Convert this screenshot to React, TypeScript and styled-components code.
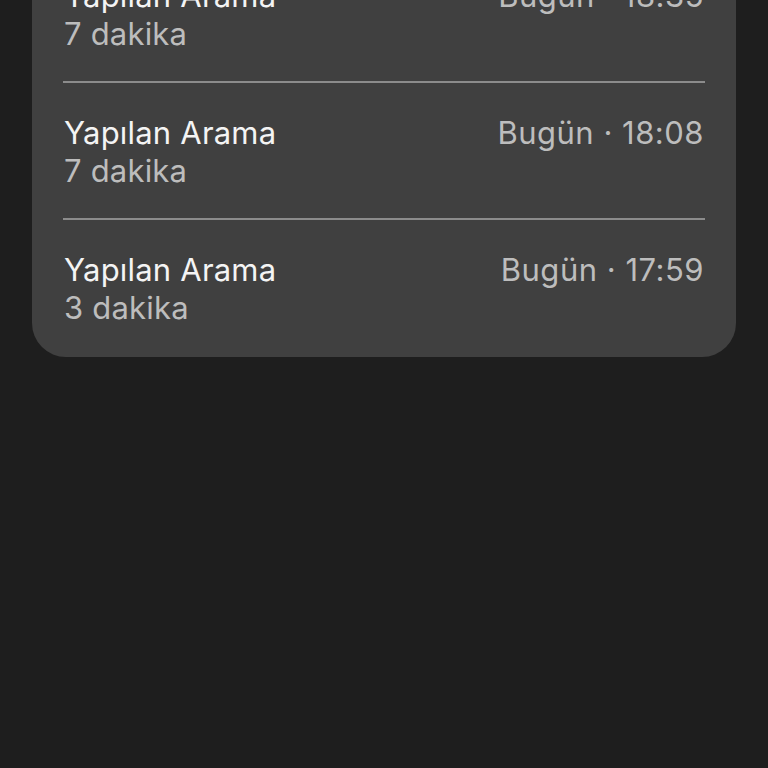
import React from 'react'
import styled, { createGlobalStyle } from 'styled-components'

const calls = [
    { title: 'Yapılan Arama', duration: '7 dakika', time: 'Bugün · 18:35' },
    { title: 'Yapılan Arama', duration: '7 dakika', time: 'Bugün · 18:08' },
    { title: 'Yapılan Arama', duration: '3 dakika', time: 'Bugün · 17:59' },
]

const GlobalStyle = createGlobalStyle`
    html, body {
        margin: 0;
        padding: 0;
        background: #1e1e1e;
        height: 100%;
        overflow: hidden;
    }
    body {
        font-family: Inter, "Noto Sans", sans-serif;
        -webkit-font-smoothing: antialiased;
    }
`

const Page = styled.div`
    width: 768px;
    height: 768px;
    padding: 0 32px;
    box-sizing: border-box;
    background: #1e1e1e;
`

const Card = styled.div`
    margin-top: -54px;
    background: #404040;
    border-radius: 34px;
    padding: 0 31px 2px;
`

const Row = styled.div<{ $last?: boolean }>`
    display: flex;
    justify-content: space-between;
    align-items: flex-start;
    padding: 31px 1px 28px;
    border-bottom: ${({ $last }) => ($last ? 'none' : '2px solid #8c8c8c')};
`

const Info = styled.div`
    display: flex;
    flex-direction: column;
`

const Line = styled.span<{ $dim?: boolean }>`
    font-size: 31px;
    line-height: 38px;
    letter-spacing: 0.2px;
    color: ${({ $dim }) => ($dim ? '#bdbdbd' : '#f4f4f4')};
`

const Time = styled(Line)`
    letter-spacing: 0.5px;
`

const App = () => {
    return (
        <Page>
            <GlobalStyle />
            <Card>
                {calls.map((c, i) => (
                    <Row key={i} $last={i === calls.length - 1}>
                        <Info>
                            <Line>{c.title}</Line>
                            <Line $dim>{c.duration}</Line>
                        </Info>
                        <Time $dim>{c.time}</Time>
                    </Row>
                ))}
            </Card>
        </Page>
    )
}

export default App
